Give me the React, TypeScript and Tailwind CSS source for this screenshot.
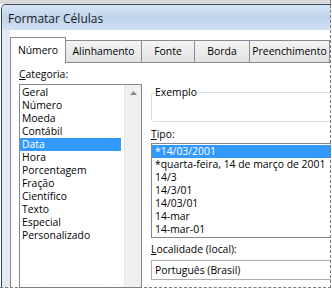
const categorias = [
  "Geral",
  "Número",
  "Moeda",
  "Contábil",
  "Data",
  "Hora",
  "Porcentagem",
  "Fração",
  "Científico",
  "Texto",
  "Especial",
  "Personalizado",
  "",
  "",
  "",
];

const tipos = [
  "*14/03/2001",
  "*quarta-feira, 14 de março de 2001",
  "14/3",
  "14/3/01",
  "14/03/01",
  "14-mar",
  "14-mar-01",
];

const tabs = [
  { label: "Alinhamento", w: "w-[76px]" },
  { label: "Fonte", w: "w-[53px]" },
  { label: "Borda", w: "w-[55px]" },
  { label: "Preenchimento", w: "w-[80px]" },
];

function Label({ first, rest }: { first: string; rest: string }) {
  return (
    <div className="h-[13px] leading-[13px] whitespace-nowrap">
      <span className="underline underline-offset-[1px]">{first}</span>
      {rest}
    </div>
  );
}

export default function App() {
  return (
    <div className="w-[332px] h-[289px] bg-white overflow-hidden font-['Open_Sans','Noto_Sans',sans-serif] text-[10.4px] text-black">
      <div className="relative w-[331px] h-[288px] overflow-hidden">
        {/* desktop strip */}
        <div className="h-[4px] bg-[#d9d9d9]" />

        {/* window */}
        <div className="ml-[1px] h-[284px] w-[340px] border-l border-t border-[#3b4859] rounded-tl-[5px] bg-[#dfe8f2] flex flex-col">
          {/* title bar */}
          <div className="h-[25px] shrink-0 rounded-tl-[4px] bg-gradient-to-b from-[#d7e5f5] via-[#bfd4ed] to-[#d2e1f3] pl-[6px] pt-[3px] flex items-center text-[12px] text-[#1b1b1b]">
            Formatar Células
          </div>

          <div className="flex-1 flex min-h-0">
            {/* left frame */}
            <div className="w-[8px] shrink-0 bg-[#e2eaf3]" />

            {/* client area */}
            <div className="flex-1 bg-white pt-[7px] flex flex-col min-h-0">
              {/* tabs */}
              <div className="relative z-10 h-[25px] flex items-end">
                <div className="w-[56px] h-[26px] -mb-px bg-white border border-b-0 border-[#898c95] flex items-center justify-center">
                  Número
                </div>
                {tabs.map((t) => (
                  <div
                    key={t.label}
                    className={`${t.w} h-[22px] bg-gradient-to-b from-[#f4f4f4] via-[#ececec] to-[#e1e1e1] border-t border-r border-[#898c95] flex items-center justify-center`}
                  >
                    {t.label}
                  </div>
                ))}
              </div>

              {/* tab panel */}
              <div className="flex-1 border-t border-l border-[#898c95] bg-white flex overflow-hidden">
                {/* left column */}
                <div className="pl-[8px] w-[131px] shrink-0 flex flex-col">
                  <div className="mt-[5px]">
                    <Label first="C" rest="ategoria:" />
                  </div>
                  <div className="mt-[3px] w-[123px] h-[240px] border border-[#828790] flex">
                    <div className="w-[101px] pt-[1px]">
                      {categorias.map((c, i) => (
                        <div
                          key={i}
                          className={`h-[13px] leading-[13px] pl-[2px] whitespace-nowrap ${
                            c === "Data" ? "bg-[#3399ff] text-white" : ""
                          }`}
                        >
                          {c}
                        </div>
                      ))}
                    </div>
                    <div className="ml-auto w-[17px] bg-[#f0f0f0] border-l border-[#e6e6e6] flex justify-center pt-[6px]">
                      <svg width="7" height="4" viewBox="0 0 7 4">
                        <path d="M0 4 L3.5 0 L7 4 Z" fill="#8a8a8a" />
                      </svg>
                    </div>
                  </div>
                </div>

                {/* right column */}
                <div className="ml-[9px] flex flex-col">
                  <div className="relative mt-[29px] w-[200px] h-[30px] border border-[#d5dfe5] rounded-[3px]">
                    <div className="absolute -top-[7px] left-[2px] bg-white px-[1px] leading-[13px]">
                      Exemplo
                    </div>
                  </div>

                  <div className="mt-[6px]">
                    <Label first="T" rest="ipo:" />
                  </div>
                  <div className="mt-[2px] w-[220px] h-[95px] border border-[#828790] py-[1px]">
                    {tipos.map((t, i) => (
                      <div
                        key={t}
                        className={`h-[13px] leading-[13px] pl-[3px] whitespace-nowrap ${
                          i === 0 ? "bg-[#3399ff] text-white" : ""
                        }`}
                      >
                        {t}
                      </div>
                    ))}
                  </div>

                  <div className="mt-[5px]">
                    <Label first="L" rest="ocalidade (local):" />
                  </div>
                  <div className="mt-[4px] w-[220px] h-[20px] border border-[#abadb3] pl-[3px] leading-[18px]">
                    Português (Brasil)
                  </div>
                </div>
              </div>
            </div>
          </div>
        </div>

        {/* crop edge */}
        <div className="absolute inset-0 border-r border-b border-dashed border-[#7b7b7b] pointer-events-none" />
      </div>
    </div>
  );
}
